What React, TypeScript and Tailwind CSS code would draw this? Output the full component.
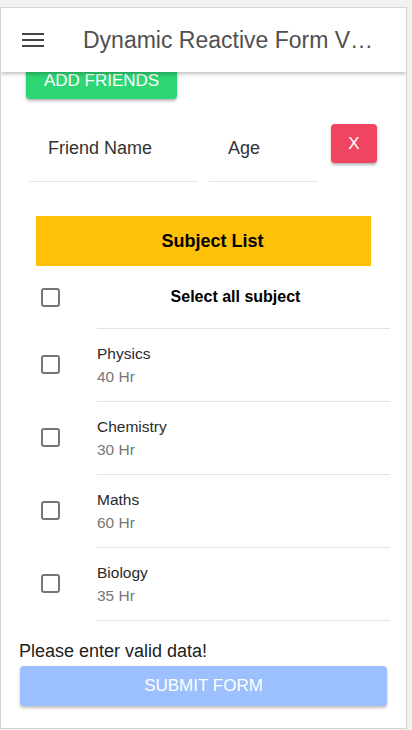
import { useState } from "react";

const subjects = [
  { name: "Physics", hours: "40 Hr" },
  { name: "Chemistry", hours: "30 Hr" },
  { name: "Maths", hours: "60 Hr" },
  { name: "Biology", hours: "35 Hr" },
];

const Box = ({ checked, onClick }: { checked: boolean; onClick: () => void }) => (
  <button
    onClick={onClick}
    className={`w-[19px] h-[19px] rounded-[3px] border-[2.5px] border-[#767676] ${checked ? "bg-[#767676]" : "bg-white"}`}
  />
);

const App = () => {
  const [picked, setPicked] = useState<boolean[]>([false, false, false, false]);
  const allPicked = picked.every(Boolean);

  const toggle = (i: number) => setPicked(picked.map((p, j) => (j === i ? !p : p)));

  return (
    <div className="h-[730px] bg-[#f2f2f2] pt-[7px] pr-[5px] font-['Liberation_Sans',Arial,sans-serif]">
      <div className="h-[722px] bg-white border border-[#d4d4d4] overflow-hidden flex flex-col">
        <header className="relative z-10 h-[64px] shrink-0 bg-white flex items-center shadow-[0_2px_4px_rgba(0,0,0,0.25)]">
          <div className="ml-[21px] w-[22px] flex flex-col gap-[4px]">
            <span className="h-[2px] bg-[#444]" />
            <span className="h-[2px] bg-[#444]" />
            <span className="h-[2px] bg-[#444]" />
          </div>
          <h1 className="ml-[39px] whitespace-nowrap text-[23px] text-[#505050] leading-none">
            Dynamic Reactive Form V…
          </h1>
        </header>

        <div className="-mt-[10px] px-[25px]">
          <button className="h-[37px] w-[151px] rounded-[4px] bg-[#2ed573] text-white text-[17px] uppercase shadow-[0_2px_3px_rgba(0,0,0,0.3)]">
            Add Friends
          </button>

          <div className="mt-[17px] flex items-start pl-[3px]">
            <div className="w-[169px] h-[66px] flex items-center border-b border-[#e6e6e6] pl-[19px] text-[18px] text-[#333]">
              Friend Name
            </div>
            <div className="ml-[11px] w-[109px] h-[66px] flex items-center border-b border-[#e6e6e6] pl-[19px] text-[18px] text-[#333]">
              Age
            </div>
            <button className="ml-[13px] mt-[8px] w-[46px] h-[39px] rounded-[4px] bg-[#ef4560] text-white text-[17px] shadow-[0_2px_3px_rgba(0,0,0,0.3)]">
              X
            </button>
          </div>

          <div className="mt-[34px] ml-[10px] w-[335px] h-[50px] bg-[#ffc107] flex items-center justify-center pl-[18px] text-[18px] font-bold text-black">
            Subject List
          </div>
        </div>

        <div className="pl-[40px] pr-[16px]">
          <div className="h-[62px] flex items-center">
            <div className="w-[56px] flex">
              <Box
                checked={allPicked}
                onClick={() => setPicked(picked.map(() => !allPicked))}
              />
            </div>
            <div className="flex-1 text-center pr-[16px] text-[16px] font-bold text-black">Select all subject</div>
          </div>
          {subjects.map((s, i) => (
            <div key={s.name} className="h-[73px] flex items-center">
              <div className="w-[56px] flex">
                <Box checked={picked[i]} onClick={() => toggle(i)} />
              </div>
              <div className="flex-1 h-full border-t border-[#e3e3e3] flex flex-col justify-center">
                <div className="text-[15.5px] text-[#2a2a2a] leading-[23px]">{s.name}</div>
                <div className="text-[15.5px] text-[#777] leading-[23px]">{s.hours}</div>
              </div>
            </div>
          ))}
          <div className="ml-[56px] border-t border-[#e3e3e3]" />
        </div>

        <div className="px-[19px] mt-[19px]">
          <p className="-ml-[1px] text-[18px] text-[#222] leading-[22px]">Please enter valid data!</p>
          <button className="mt-[4px] w-full h-[40px] rounded-[4px] bg-[#9cbffd] text-white text-[17px] uppercase shadow-[0_2px_3px_rgba(0,0,0,0.25)]">
            Submit Form
          </button>
        </div>
      </div>
    </div>
  );
};

export default App;
